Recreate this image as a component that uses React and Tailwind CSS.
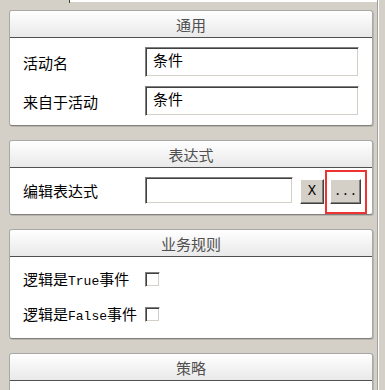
import React from "react";

const cjk = { fontFamily: '"Noto Sans CJK SC", "Liberation Sans", sans-serif' };
const mono = { fontFamily: '"Liberation Mono", "DejaVu Sans Mono", monospace' };

function Panel({ title, children }) {
  return (
    <div className="rounded-[3px] border border-[#a8a8a8] border-b-[#808080] bg-white shadow-[1px_1px_0_#b8b4ac]">
      <div className="h-[27px] flex items-center justify-center rounded-t-[3px] bg-gradient-to-b from-white to-[#e9e9e9] border-b border-[#505050] text-[15px] leading-none text-[#505050]">
        {title}
      </div>
      {children}
    </div>
  );
}

const inset =
  "border border-t-[#808080] border-l-[#808080] border-b-white border-r-white shadow-[inset_1px_1px_0_#404040,inset_-1px_-1px_0_#d4d0c8] bg-white";

const raised =
  "border border-t-white border-l-white border-b-[#404040] border-r-[#404040] shadow-[inset_-1px_-1px_0_#808080] bg-[#d4d0c8]";

function Row({ label, children, h = "" }) {
  return (
    <div className={`flex items-center ${h}`}>
      <div className="w-[122px] text-[15px] leading-none text-black whitespace-nowrap">{label}</div>
      {children}
    </div>
  );
}

function TextBox({ value, w, h }) {
  return (
    <div className={`${inset} ${w} ${h} px-[7px] pt-[2px] text-[15px] leading-[20px] text-black`}>
      {value}
    </div>
  );
}

function Check() {
  return <div className={`${inset} w-[15px] h-[15px]`} />;
}

export default function App() {
  return (
    <div className="w-[385px] h-[390px] overflow-hidden bg-[#d4d0c8] flex" style={cjk}>
      <div className="w-[377px] flex flex-col">
        <div className="h-[10px] flex items-start shrink-0">
          <div className="ml-[69px] w-[1px] h-[3px] bg-[#404040]" />
          <div className="flex-1 h-[2px] bg-white" />
        </div>
        <div className="pl-[9px] pr-[4px] flex flex-col gap-[14px]">
          <Panel title="通用">
            <div className="pl-[13px] pt-[9px] pb-[9px] flex flex-col gap-[9px]">
              <Row label="活动名">
                <TextBox value="条件" w="w-[214px]" h="h-[30px]" />
              </Row>
              <Row label="来自于活动">
                <TextBox value="条件" w="w-[214px]" h="h-[30px]" />
              </Row>
            </div>
          </Panel>

          <Panel title="表达式">
            <div className="pl-[13px] pt-[9px] pb-[10px]">
              <Row label="编辑表达式">
                <TextBox value="" w="w-[148px]" h="h-[27px]" />
                <div className="flex self-end gap-[6px] ml-[7px]">
                  <button
                    className={`${raised} w-[24px] h-[25px] flex items-center justify-center text-[14px] text-black`}
                    style={mono}
                  >
                    X
                  </button>
                  <div className="relative">
                    <button
                      className={`${raised} w-[31px] h-[25px] flex items-center justify-center text-[13px] text-black`}
                      style={mono}
                    >
                      ...
                    </button>
                    <div className="absolute left-[-5px] top-[-9px] w-[42px] h-[44px] border-2 border-[#ee3333]" />
                  </div>
                </div>
              </Row>
            </div>
          </Panel>

          <Panel title="业务规则">
            <div className="pl-[13px] pt-[15px] pb-[16px] flex flex-col gap-[20px]">
              <Row h="h-[15px]" label={<span>逻辑是<span className="text-[13px]" style={mono}>True</span>事件</span>}>
                <Check />
              </Row>
              <Row h="h-[15px]" label={<span>逻辑是<span className="text-[13px]" style={mono}>False</span>事件</span>}>
                <Check />
              </Row>
            </div>
          </Panel>

          <Panel title="策略">
            <div className="h-[60px]" />
          </Panel>
        </div>
      </div>
      <div className="w-[1px] bg-[#a0a0a0]" />
      <div className="w-[1px] bg-white" />
      <div className="flex-1" />
    </div>
  );
}
